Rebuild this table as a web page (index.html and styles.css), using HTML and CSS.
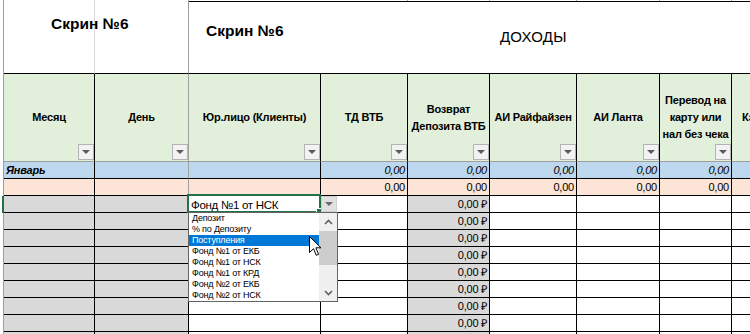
FILE: index.html
```html
<!DOCTYPE html>
<html lang="ru">
<head>
<meta charset="utf-8">
<title>Скрин №6</title>
<link rel="stylesheet" href="styles.css">
</head>
<body>
<div class="sheet">
  <!-- row 0: thin strip of the row above -->
  <div class="rh"></div>
  <div class="strip s-light"></div>
  <div class="strip s-grey"></div>
  <div class="strip s-none"></div>
  <div class="strip s-grey"></div>
  <div class="strip s-grey"></div>
  <div class="strip s-grey"></div>
  <div class="strip s-grey"></div>
  <div class="strip s-grey"></div>
  <div class="strip s-none"></div>

  <!-- row 1: titles -->
  <div class="rh"></div>
  <div class="title t-a"><span class="big">Скрин №6</span></div>
  <div class="title t-b"></div>
  <div class="title t-c">
    <span class="big t-c1">Скрин №6</span>
    <span class="income">ДОХОДЫ</span>
  </div>

  <!-- row 2: column headers -->
  <div class="rh"></div>
  <div class="hd"><span>Месяц</span><i class="filt"></i></div>
  <div class="hd gl"><span>День</span><i class="filt"></i></div>
  <div class="hd"><span>Юр.лицо (Клиенты)</span><i class="filt"></i></div>
  <div class="hd"><span>ТД ВТБ</span><i class="filt"></i></div>
  <div class="hd"><span>Возврат<br>Депозита ВТБ</span><i class="filt"></i></div>
  <div class="hd"><span>АИ Райфайзен</span><i class="filt"></i></div>
  <div class="hd"><span>АИ Ланта</span><i class="filt"></i></div>
  <div class="hd"><span>Перевод на<br>карту или<br>нал без чека</span><i class="filt"></i></div>
  <div class="hd last left"><span>Кэшбэк</span></div>

  <!-- row 3: month -->
  <div class="rh"></div>
  <div class="cell blue month">Январь</div>
  <div class="cell blue gl"></div>
  <div class="cell blue"></div>
  <div class="cell blue num it">0,00</div>
  <div class="cell blue num it">0,00</div>
  <div class="cell blue num it">0,00</div>
  <div class="cell blue num it">0,00</div>
  <div class="cell blue num it">0,00</div>
  <div class="cell blue last"></div>

  <!-- row 4: totals -->
  <div class="rh"></div>
  <div class="cell peach"></div>
  <div class="cell peach gl"></div>
  <div class="cell peach"></div>
  <div class="cell peach num">0,00</div>
  <div class="cell peach num">0,00</div>
  <div class="cell peach num">0,00</div>
  <div class="cell peach num">0,00</div>
  <div class="cell peach num">0,00</div>
  <div class="cell peach last"></div>

  <!-- data rows -->
  <div class="rh active-rh"></div>
  <div class="cell grey"></div><div class="cell grey"></div>
  <div class="cell edit">Фонд №1 от НСК</div><div class="cell"></div>
  <div class="cell grey num">0,00 ₽</div>
  <div class="cell"></div><div class="cell"></div><div class="cell"></div><div class="cell last"></div>

  <div class="rh"></div>
  <div class="cell grey"></div><div class="cell grey"></div>
  <div class="cell"></div><div class="cell"></div>
  <div class="cell grey num">0,00 ₽</div>
  <div class="cell"></div><div class="cell"></div><div class="cell"></div><div class="cell last"></div>

  <div class="rh"></div>
  <div class="cell grey"></div><div class="cell grey"></div>
  <div class="cell"></div><div class="cell"></div>
  <div class="cell grey num">0,00 ₽</div>
  <div class="cell"></div><div class="cell"></div><div class="cell"></div><div class="cell last"></div>

  <div class="rh"></div>
  <div class="cell grey"></div><div class="cell grey"></div>
  <div class="cell"></div><div class="cell"></div>
  <div class="cell grey num">0,00 ₽</div>
  <div class="cell"></div><div class="cell"></div><div class="cell"></div><div class="cell last"></div>

  <div class="rh"></div>
  <div class="cell grey"></div><div class="cell grey"></div>
  <div class="cell"></div><div class="cell"></div>
  <div class="cell grey num">0,00 ₽</div>
  <div class="cell"></div><div class="cell"></div><div class="cell"></div><div class="cell last"></div>

  <div class="rh"></div>
  <div class="cell grey"></div><div class="cell grey"></div>
  <div class="cell"></div><div class="cell"></div>
  <div class="cell grey num">0,00 ₽</div>
  <div class="cell"></div><div class="cell"></div><div class="cell"></div><div class="cell last"></div>

  <div class="rh"></div>
  <div class="cell grey"></div><div class="cell grey"></div>
  <div class="cell"></div><div class="cell"></div>
  <div class="cell grey num">0,00 ₽</div>
  <div class="cell"></div><div class="cell"></div><div class="cell"></div><div class="cell last"></div>

  <div class="rh"></div>
  <div class="cell grey"></div><div class="cell grey"></div>
  <div class="cell"></div><div class="cell"></div>
  <div class="cell grey num">0,00 ₽</div>
  <div class="cell"></div><div class="cell"></div><div class="cell"></div><div class="cell last"></div>

  <div class="rh"></div>
  <div class="cell grey"></div><div class="cell grey"></div>
  <div class="cell"></div><div class="cell"></div>
  <div class="cell grey"></div>
  <div class="cell"></div><div class="cell"></div><div class="cell"></div><div class="cell last"></div>

  <!-- overlays: active cell, validation dropdown, cursor -->
  <div class="active"></div>
  <div class="handle"></div>
  <div class="ddbtn"><i class="tri"></i></div>
  <div class="list">
    <div class="items">
      <div class="item">Депозит</div>
      <div class="item">% по Депозиту</div>
      <div class="item sel">Поступления</div>
      <div class="item">Фонд №1 от ЕКБ</div>
      <div class="item">Фонд №1 от НСК</div>
      <div class="item">Фонд №1 от КРД</div>
      <div class="item">Фонд №2 от ЕКБ</div>
      <div class="item">Фонд №2 от НСК</div>
    </div>
    <div class="sbar">
      <div class="sb-btn"><svg width="9" height="6" viewBox="0 0 9 6"><polyline points="1,5 4.5,1.5 8,5" fill="none" stroke="#606060" stroke-width="1.6"/></svg></div>
      <div class="thumb"></div>
      <div class="sb-space"></div>
      <div class="sb-btn"><svg width="9" height="6" viewBox="0 0 9 6"><polyline points="1,1 4.5,4.5 8,1" fill="none" stroke="#606060" stroke-width="1.6"/></svg></div>
    </div>
  </div>
  <svg class="cursor" width="13" height="21" viewBox="0 0 13 21">
    <path d="M0.5,0.5 L0.5,16.5 L4.5,12.7 L7.3,19.3 L9.6,18.3 L6.9,11.8 L12,11.8 Z" fill="#fff" stroke="#000" stroke-width="1" stroke-linejoin="miter"/>
  </svg>
</div>
</body>
</html>
```

FILE: styles.css
```css
html, body {
  margin: 0;
  padding: 0;
  background: #fff;
}
body {
  width: 750px;
  height: 334px;
  overflow: hidden;
  font-family: "Liberation Sans", Arial, sans-serif;
  color: #000;
}
.sheet {
  position: relative;
  display: grid;
  grid-template-columns: 4px 91px 94px 132px 87px 82px 87px 83px 72px 100px;
  grid-template-rows: 1px 73px 88px 17px 17px repeat(9, 17px);
  width: 850px;
}
.sheet > div {
  box-sizing: border-box;
}

/* row header stub (left edge) */
.rh {
  border-right: 1px solid #9e9e9e;
}
.active-rh {
  border-right: 2px solid #217346;
}

/* top strip */
.strip.s-light { border-right: 1px solid #d9d9d9; }
.strip.s-grey { border-right: 1px solid #a6a6a6; }

/* titles */
.title {
  border-bottom: 1px solid #000;
}
.t-a {
  border-right: 1px solid #d9d9d9;
  padding: 13px 0 0 47px;
  white-space: nowrap;
}
.t-b {
  border-right: 1px solid #a0a0a0;
}
.t-c {
  grid-column: 4 / -1;
  border-top: 1px solid #000;
  display: grid;
  grid-template-columns: 311px auto;
  align-items: start;
}
.big {
  font-weight: bold;
  font-size: 15.5px;
  line-height: 20px;
  letter-spacing: 0;
}
.t-c1 {
  padding: 19px 0 0 17px;
}
.income {
  font-size: 15px;
  line-height: 20px;
  padding-top: 25px;
  letter-spacing: 0.2px;
}

/* header row */
.hd {
  position: relative;
  background: #e2efda;
  border-right: 1px solid #000;
  border-bottom: 1px solid #9e9e9e;
  display: flex;
  align-items: center;
  justify-content: center;
  text-align: center;
  font-weight: bold;
  font-size: 11px;
  line-height: 17px;
  letter-spacing: -0.2px;
  white-space: nowrap;
}
.hd.left {
  justify-content: flex-start;
  padding-left: 10px;
}
.hd.last, .cell.last {
  border-right: none;
}
.sheet > .gl {
  border-right-color: #a0a0a0;
}
.filt {
  position: absolute;
  right: 0;
  bottom: 1px;
  width: 16px;
  height: 16px;
  box-sizing: border-box;
  background: #f2f2f2;
  border: 1px solid #b4b4b4;
  display: flex;
  align-items: center;
  justify-content: center;
}
.filt::after {
  content: "";
  width: 0;
  height: 0;
  border-left: 4px solid transparent;
  border-right: 4px solid transparent;
  border-top: 4px solid #5a5a5a;
}

/* body cells */
.cell {
  border-right: 1px solid #000;
  border-bottom: 1px solid #000;
  font-size: 11px;
  line-height: 15px;
  padding-top: 1px;
  letter-spacing: -0.2px;
  white-space: nowrap;
}
.blue { background: #bdd7ee; }
.peach { background: #fce4d6; }
.grey { background: #d9d9d9; }
.num {
  text-align: right;
  padding-right: 2px;
}
.it { font-style: italic; }
.month {
  font-weight: bold;
  font-style: italic;
  padding-left: 2px;
}
.edit {
  font-size: 11.5px;
  letter-spacing: -0.3px;
  padding-left: 2px;
  padding-top: 2px;
  line-height: 14px;
}

/* active cell + dropdown */
.active {
  position: absolute;
  left: 187px;
  top: 194px;
  width: 134px;
  height: 19px;
  box-sizing: border-box;
  border: 2px solid #217346;
}
.handle {
  position: absolute;
  left: 316px;
  top: 208px;
  width: 6px;
  height: 6px;
  box-sizing: border-box;
  background: #217346;
  border: 1px solid #fff;
}
.ddbtn {
  position: absolute;
  left: 321px;
  top: 196px;
  width: 16px;
  height: 16px;
  box-sizing: border-box;
  background: #e1e1e1;
  border: 1px solid #cfcfcf;
  display: flex;
  align-items: center;
  justify-content: center;
}
.tri {
  width: 0;
  height: 0;
  border-left: 4px solid transparent;
  border-right: 4px solid transparent;
  border-top: 4px solid #6a6a6a;
}
.list {
  position: absolute;
  left: 188px;
  top: 212px;
  width: 150px;
  height: 90px;
  box-sizing: border-box;
  border: 1px solid #646464;
  background: #fff;
  display: flex;
}
.items {
  width: 130px;
}
.item {
  height: 11px;
  line-height: 11px;
  padding-left: 3px;
  font-size: 9px;
  letter-spacing: -0.2px;
  white-space: nowrap;
  color: #000;
}
.item.sel {
  background: #0078d7;
  color: #fff;
}
.sbar {
  width: 18px;
  background: #f0f0f0;
  display: flex;
  flex-direction: column;
}
.sb-btn {
  height: 17px;
  display: flex;
  align-items: center;
  justify-content: center;
}
.sb-btn:first-child {
  height: 18px;
}
.thumb {
  height: 34px;
  background: #cdcdcd;
}
.sb-space {
  flex: 1;
}
.cursor {
  position: absolute;
  left: 309px;
  top: 236px;
}
```
